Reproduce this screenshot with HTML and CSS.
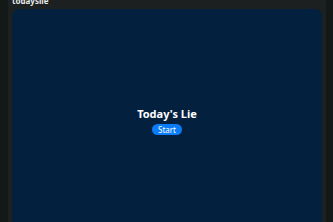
FILE: index.html
```html
<!DOCTYPE html>
<html lang="en">
<head>
    <meta charset="UTF-8">
    <meta name="viewport" content="width=device-width, initial-scale=1.0">
    <title>todaysLie</title>
    <link rel="stylesheet" href="styles.css">
</head>
<body>
    <div class="frame">
        <h1 class="app-title">todayslie</h1>
        <div class="game-panel">
            <h2>Today's Lie</h2>
            <button class="start-btn">Start</button>
        </div>
    </div>
</body>
</html>
```

FILE: styles.css
```css
* {
    margin: 0;
    padding: 0;
    box-sizing: border-box;
}

body {
    font-family: "Noto Sans", "DejaVu Sans", sans-serif;
    background-color: #131917;
    height: 222px;
    overflow: hidden;
}

.frame {
    margin: 0 7px 0 8px;
    height: 100%;
    background-color: #1c2020;
    padding: 0 4px;
    overflow: hidden;
}

.app-title {
    font-size: 8px;
    font-weight: 700;
    color: #e8eaea;
    line-height: 10px;
    margin-top: -4px;
    margin-bottom: 3px;
}

.game-panel {
    height: 240px;
    background-color: #03203f;
    border-radius: 7px 7px 0 0;
    display: flex;
    flex-direction: column;
    align-items: center;
    padding-top: 97px;
    color: #fff;
}

.game-panel h2 {
    font-size: 11px;
    font-weight: 700;
    line-height: 16px;
    margin-bottom: 2px;
}

.start-btn {
    font-family: inherit;
    font-size: 8px;
    color: #fff;
    background-color: #0b7cf8;
    border: none;
    border-radius: 6px;
    padding: 0 6px;
    line-height: 11px;
}
```
